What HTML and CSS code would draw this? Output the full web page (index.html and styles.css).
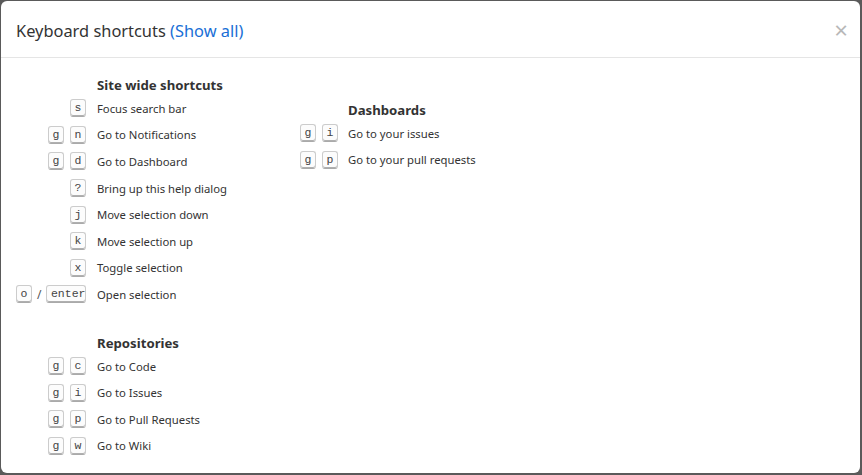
FILE: index.html
```html
<!DOCTYPE html>
<html>
<head>
<meta charset="utf-8">
<link rel="stylesheet" href="styles.css">
</head>
<body>
<div class="modal">
  <div class="modal-header">
    <h2 class="title">Keyboard shortcuts <a class="show-all" href="#">(Show all)</a></h2>
    <span class="close">&times;</span>
  </div>
  <div class="modal-body">
    <div class="col col-left">
      <div class="section">
        <div class="heading">Site wide shortcuts</div>
        <div class="row"><span class="keys"><kbd>s</kbd></span><span class="desc">Focus search bar</span></div>
        <div class="row"><span class="keys"><kbd>g</kbd><kbd>n</kbd></span><span class="desc">Go to Notifications</span></div>
        <div class="row"><span class="keys"><kbd>g</kbd><kbd>d</kbd></span><span class="desc">Go to Dashboard</span></div>
        <div class="row"><span class="keys"><kbd>?</kbd></span><span class="desc">Bring up this help dialog</span></div>
        <div class="row"><span class="keys"><kbd>j</kbd></span><span class="desc">Move selection down</span></div>
        <div class="row"><span class="keys"><kbd>k</kbd></span><span class="desc">Move selection up</span></div>
        <div class="row"><span class="keys"><kbd>x</kbd></span><span class="desc">Toggle selection</span></div>
        <div class="row"><span class="keys"><kbd>o</kbd><span class="slash">/</span><kbd>enter</kbd></span><span class="desc">Open selection</span></div>
      </div>
      <div class="section section-repos">
        <div class="heading">Repositories</div>
        <div class="row"><span class="keys"><kbd>g</kbd><kbd>c</kbd></span><span class="desc">Go to Code</span></div>
        <div class="row"><span class="keys"><kbd>g</kbd><kbd>i</kbd></span><span class="desc">Go to Issues</span></div>
        <div class="row"><span class="keys"><kbd>g</kbd><kbd>p</kbd></span><span class="desc">Go to Pull Requests</span></div>
        <div class="row"><span class="keys"><kbd>g</kbd><kbd>w</kbd></span><span class="desc">Go to Wiki</span></div>
      </div>
    </div>
    <div class="col col-right">
      <div class="section">
        <div class="heading">Dashboards</div>
        <div class="row"><span class="keys"><kbd>g</kbd><kbd>i</kbd></span><span class="desc">Go to your issues</span></div>
        <div class="row"><span class="keys"><kbd>g</kbd><kbd>p</kbd></span><span class="desc">Go to your pull requests</span></div>
      </div>
    </div>
  </div>
</div>
</body>
</html>
```
FILE: styles.css
```css
html, body {
  margin: 0;
  padding: 0;
  height: 100%;
}
body {
  background: #5a5a5a;
  font-family: "Noto Sans", "Open Sans", sans-serif;
  color: #333;
  padding: 1px 2px 2px 1px;
  box-sizing: border-box;
}
.modal {
  background: #fff;
  height: 100%;
  border-radius: 6px;
  box-sizing: border-box;
  overflow: hidden;
}
.modal-header {
  height: 57px;
  box-sizing: border-box;
  border-bottom: 1px solid #e5e5e5;
  display: flex;
  align-items: center;
  justify-content: space-between;
  padding: 2px 12px 0 15px;
}
.title {
  margin: 0;
  font-weight: normal;
  font-size: 16.4px;
  color: #333;
}
.show-all {
  color: #1a6fd6;
  text-decoration: none;
}
.close {
  color: #b8b8b8;
  font-size: 24px;
  line-height: 1;
  font-weight: normal;
}
.modal-body {
  display: flex;
  padding: 17px 0 0 15px;
}
.col-left {
  width: 250px;
}
.col-right {
  padding-top: 25px;
}
.heading {
  font-weight: bold;
  font-size: 13.2px;
  height: 20px;
  line-height: 20px;
  padding-left: 81px;
}
.col-right .heading {
  padding-left: 82px;
}
.section-repos {
  margin-top: 25px;
}
.row {
  display: flex;
  align-items: center;
  height: 26.6px;
  font-size: 11.3px;
}
.keys {
  width: 70px;
  display: flex;
  justify-content: flex-end;
  align-items: center;
  gap: 6px;
  margin-right: 11px;
  flex-shrink: 0;
}
.col-right .keys {
  width: 72px;
  margin-right: 10px;
}
.slash {
  color: #555;
  font-size: 12px;
  margin: 0 -1px;
}
kbd {
  display: inline-block;
  box-sizing: border-box;
  height: 18px;
  min-width: 16px;
  padding: 0 3.5px;
  font-family: "Liberation Mono", "DejaVu Sans Mono", monospace;
  font-size: 11.5px;
  line-height: 15px;
  color: #444;
  text-align: center;
  background: #fcfcfc;
  border: 1px solid #ccc;
  border-bottom-color: #aaa;
  border-radius: 3px;
  box-shadow: inset 0 -1px 0 #b0b0b0;
}
.desc {
  white-space: nowrap;
}
```
